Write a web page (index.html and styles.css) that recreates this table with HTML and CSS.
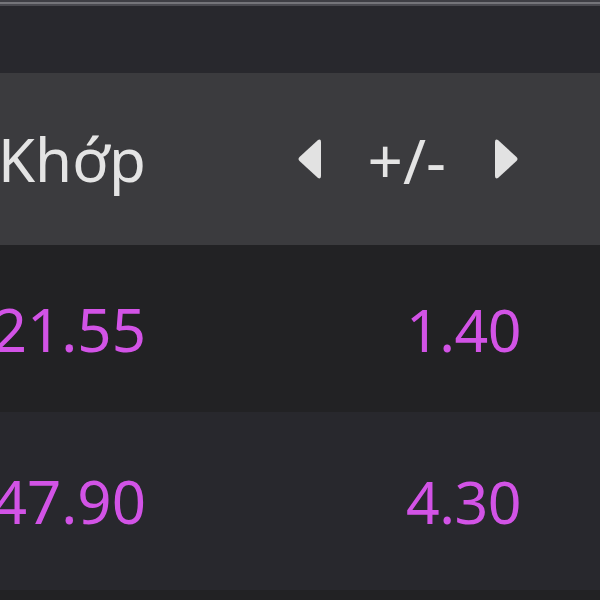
FILE: index.html
```html
<!DOCTYPE html>
<html lang="vi">
<head>
<meta charset="utf-8">
<link rel="stylesheet" href="styles.css">
</head>
<body>
<div class="screen">
  <div class="topbar"></div>
  <div class="row head">
    <div class="c1">Khớp</div>
    <div class="c2 ctrl">
      <svg class="tri" width="25" height="42" viewBox="0 0 25 42"><path d="M21 2 Q24 0.5 24 4 L24 38 Q24 41.5 21 40 L2.5 23 Q0.5 21 2.5 19 Z" fill="#e2e2e2"/></svg>
      <span class="pm">+/-</span>
      <svg class="tri" width="25" height="42" viewBox="0 0 25 42"><path d="M4 2 Q1 0.5 1 4 L1 38 Q1 41.5 4 40 L22.5 23 Q24.5 21 22.5 19 Z" fill="#e2e2e2"/></svg>
    </div>
  </div>
  <div class="row r1">
    <div class="c1 num">21.55</div>
    <div class="c2 num">1.40</div>
  </div>
  <div class="row r2">
    <div class="c1 num">47.90</div>
    <div class="c2 num">4.30</div>
  </div>
  <div class="bottom"></div>
</div>
</body>
</html>
```

FILE: styles.css
```css
html, body {
  margin: 0;
  padding: 0;
  background: #27272c;
}
.screen {
  width: 600px;
  height: 600px;
  overflow: hidden;
  display: flex;
  flex-direction: column;
  font-family: "Noto Sans", "Open Sans", sans-serif;
}
.topbar {
  height: 73px;
  box-sizing: border-box;
  background: #28282d;
  border-top: 2px solid #3e3e44;
  box-shadow: inset 0 2px 0 #75757a, inset 0 4px 0 #4a4a50;
}
.row {
  display: grid;
  grid-template-columns: 146px 375px 1fr;
  align-items: center;
}
.head {
  height: 172px;
  background: #3b3b3e;
}
.r1 {
  height: 167px;
  background: #222224;
}
.r2 {
  height: 178px;
  background: #28282d;
}
.bottom {
  flex: 1;
  background: #222224;
}
.c1 {
  text-align: right;
  font-size: 60px;
  color: #e4e4e4;
  white-space: nowrap;
  direction: rtl;
}
.c2 {
  text-align: right;
  font-size: 59px;
  letter-spacing: -0.5px;
  white-space: nowrap;
}
.num {
  color: #d253e6;
}
.ctrl {
  display: flex;
  align-items: center;
  justify-content: flex-end;
  color: #e4e4e4;
  padding-right: 2px;
  letter-spacing: 0;
}
.pm {
  font-size: 62px;
  margin: 0 48px 0 46px;
  position: relative;
  top: 1px;
}
.tri {
  display: block;
}
```
